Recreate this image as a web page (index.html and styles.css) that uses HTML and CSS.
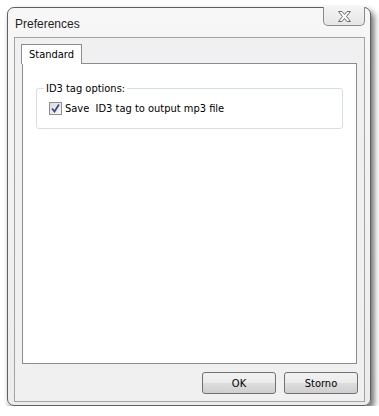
FILE: index.html
```html
<!DOCTYPE html>
<html>
<head>
<meta charset="utf-8">
<link rel="stylesheet" href="styles.css">
</head>
<body>
<div class="window">
  <div class="titlebar">
    <span class="title">Preferences</span>
    <button class="close" aria-label="Close">
      <svg width="15" height="11" viewBox="0 0 15 11">
        <path d="M1.5 0.5h3.5l2.5 3 2.5-3h3.5l-4 5 4 5h-3.5l-2.5-3-2.5 3h-3.5l4-5z" fill="#fbfbfb" stroke="#6b6b6b" stroke-width="1" stroke-linejoin="round"/>
      </svg>
    </button>
  </div>
  <div class="client">
    <div class="tabs">
      <div class="tab active">Standard</div>
    </div>
    <div class="panel">
      <fieldset class="group">
        <legend>ID3 tag options:</legend>
        <label class="check">
          <span class="box">
            <svg width="9" height="9" viewBox="0 0 9 9"><path d="M1 4.5l2.5 3 4.5-7" fill="none" stroke="#3c4a86" stroke-width="1.8"/></svg>
          </span>
          <span>Save&nbsp; ID3 tag to output mp3 file</span>
        </label>
      </fieldset>
    </div>
    <div class="buttons">
      <button class="btn">OK</button>
      <button class="btn">Storno</button>
    </div>
  </div>
</div>
</body>
</html>
```
FILE: styles.css
```css
html, body {
  margin: 0;
  padding: 0;
  background: #ffffff;
}
body {
  font-family: "DejaVu Sans Condensed", "DejaVu Sans", sans-serif;
  font-size: 11px;
  color: #000;
}
.window {
  box-sizing: border-box;
  margin: 7px 0 0 7px;
  width: 364px;
  height: 399px;
  border: 1px solid #5f5f5f;
  border-radius: 7px;
  background: linear-gradient(to bottom, #f7f7f7, #ececec);
  box-shadow: 3px 4px 6px rgba(0, 0, 0, 0.6);
  display: flex;
  flex-direction: column;
}
.titlebar {
  height: 29px;
  display: flex;
  justify-content: space-between;
  align-items: flex-start;
  padding-left: 7px;
}
.title {
  font-family: "Liberation Sans", Arial, sans-serif;
  font-size: 12px;
  margin-top: 9px;
  color: #1f1f1f;
}
.close {
  width: 42px;
  height: 19px;
  margin: -1px 5px 0 0;
  padding: 0;
  border: 1px solid #8a8a8a;
  border-top: none;
  border-radius: 0 0 5px 5px;
  background: linear-gradient(to bottom, #f4f4f4, #e6e6e6);
  display: flex;
  align-items: center;
  justify-content: center;
}
.client {
  flex: 1;
  margin: 0 5px 3px 6px;
  border: 1px solid #a3a3a3;
  background: #f0f0f0;
  display: flex;
  flex-direction: column;
  padding: 6px 7px 7px 7px;
}
.tabs {
  display: flex;
  height: 19px;
  margin-left: -1px;
}
.tab {
  box-sizing: border-box;
  height: 20px;
  width: 61px;
  padding-top: 3px;
  text-align: center;
  border: 1px solid #898c95;
  border-bottom: none;
  background: #fff;
  position: relative;
  z-index: 1;
}
.panel {
  flex: 1;
  background: #fff;
  border: 1px solid #898c95;
  padding: 18px 13px 0 13px;
}
.group {
  margin: 0;
  border: 1px solid #d5dfe5;
  border-radius: 3px;
  padding: 7px 0 5px 12px;
  height: 33px;
}
.group legend {
  padding: 0 2px;
  margin-left: -5px;
}
.check {
  display: flex;
  align-items: center;
  gap: 3px;
}
.box {
  box-sizing: border-box;
  width: 13px;
  height: 13px;
  border: 1px solid #8f8f8f;
  background: linear-gradient(to bottom right, #dcdcdc, #f7f7f7);
  display: flex;
  align-items: center;
  justify-content: center;
}
.buttons {
  display: flex;
  justify-content: flex-end;
  gap: 8px;
  margin-top: 8px;
  margin-right: -1px;
}
.btn {
  width: 74px;
  height: 22px;
  padding: 0;
  border: 1px solid #707070;
  border-radius: 3px;
  background: linear-gradient(to bottom, #f2f2f2 0%, #ebebeb 50%, #dddddd 51%, #cfcfcf 100%);
  font-family: "DejaVu Sans Condensed", "DejaVu Sans", sans-serif;
  font-size: 11px;
  color: #000;
}
```
